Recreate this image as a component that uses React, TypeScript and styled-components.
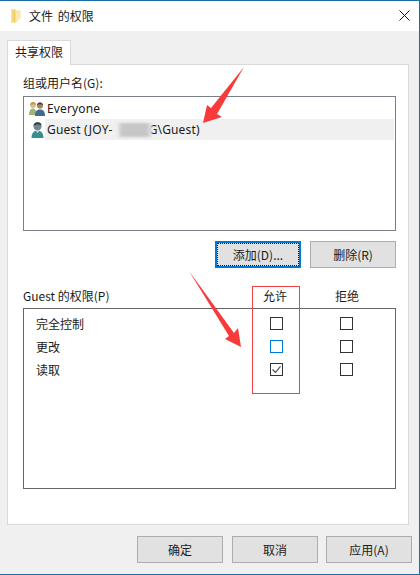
import React from 'react';
import styled, { createGlobalStyle } from 'styled-components';

const GlobalStyle = createGlobalStyle`
  html, body {
    margin: 0;
    padding: 0;
    background: #f0f0f0;
  }
  body {
    font-family: "Noto Sans CJK SC", "Liberation Sans", sans-serif;
    font-size: 12px;
    color: #1a1a1a;
  }
`;

const Window = styled.div`
  position: relative;
  box-sizing: border-box;
  width: 420px;
  height: 575px;
  display: flex;
  flex-direction: column;
  background: #f0f0f0;
  border: 1px solid #1a6ea8;
  border-left: 0;
  overflow: hidden;
`;

const TitleBar = styled.div`
  height: 30px;
  flex: none;
  display: flex;
  align-items: center;
  gap: 8px;
  padding: 0 9px 0 11px;
  background: #fff;
`;

const TitleText = styled.span`
  flex: 1;
  font-size: 12px;
  line-height: 14px;
  word-spacing: 2px;
`;

const CloseGlyph = styled.svg`
  width: 11px;
  height: 11px;
  margin-top: -2px;
`;

const Body = styled.div`
  flex: 1;
  display: flex;
  flex-direction: column;
  padding: 9px 10px 11px 7px;
`;

const TabStrip = styled.div`
  height: 24px;
  flex: none;
  display: flex;
`;

const Tab = styled.div`
  position: relative;
  z-index: 1;
  box-sizing: border-box;
  width: 64px;
  height: 25px;
  padding-top: 2px;
  text-align: center;
  line-height: 18px;
  background: #fff;
  border: 1px solid #d9d9d9;
  border-bottom: 0;
`;

const Panel = styled.div`
  box-sizing: border-box;
  width: 402px;
  height: 461px;
  flex: none;
  display: flex;
  flex-direction: column;
  padding: 8px 12px 35px 15px;
  background: #fff;
  border: 1px solid #d9d9d9;
`;

const FieldLabel = styled.div`
  height: 23px;
  line-height: 19px;
  flex: none;
`;

const UserList = styled.div`
  box-sizing: border-box;
  height: 135px;
  flex: none;
  padding: 1px 1px 0 5px;
  display: flex;
  flex-direction: column;
  background: #fff;
  border: 1px solid #7a7f87;
`;

const UserRow = styled.div`
  height: 21px;
  flex: none;
  display: flex;
  align-items: center;
`;

const IconSlot = styled.span`
  width: 16px;
  flex: none;
  display: flex;
  justify-content: center;
`;

const UserName = styled.span<{ $selected?: boolean }>`
  flex: 1;
  height: 100%;
  display: flex;
  align-items: center;
  padding-left: 2px;
  background: ${(p) => (p.$selected ? '#f0f0f0' : 'transparent')};
  font-family: "Noto Sans", "Liberation Sans", sans-serif;
  letter-spacing: 0.15px;
`;

const Blurred = styled.span`
  position: relative;
  display: inline-block;
  width: 35px;
  height: 14px;
  margin: 0 -3px 0 4px;
  background: linear-gradient(90deg, #ececec, #c8c8c8 14%, #c6c6c6 84%, #e4e4e4);
  filter: blur(1.1px);
`;

const ButtonRow = styled.div<{ $gap: number }>`
  display: flex;
  justify-content: flex-end;
  gap: ${(p) => p.$gap}px;
  flex: none;
`;

const Button = styled.div<{ $focused?: boolean }>`
  box-sizing: border-box;
  width: 86px;
  height: 27px;
  padding-bottom: 1px;
  display: flex;
  align-items: center;
  justify-content: center;
  background: #e1e1e1;
  border: ${(p) => (p.$focused ? '2px solid #0078d7' : '1px solid #adadad')};
  outline: ${(p) => (p.$focused ? '1px dotted #111' : 'none')};
  outline-offset: -3px;
`;

const ActionRow = styled(ButtonRow)`
  margin-top: 10px;
`;

const PermHeader = styled.div`
  height: 30px;
  margin-top: 10px;
  padding-right: 37px;
  flex: none;
  display: grid;
  grid-template-columns: 1fr 24px 24px;
  column-gap: 48px;
  align-items: end;
  line-height: 24px;
  & > span {
    white-space: nowrap;
  }
`;

const PermBox = styled.div`
  box-sizing: border-box;
  height: 181px;
  flex: none;
  padding: 3px 42px 0 12px;
  background: #fff;
  border: 1px solid #666;
`;

const PermRow = styled.div`
  height: 23px;
  display: grid;
  grid-template-columns: 1fr 13px 13px;
  column-gap: 57px;
  align-items: center;
  line-height: 20px;
`;

const Check = styled.span<{ $hover?: boolean }>`
  box-sizing: border-box;
  width: 13px;
  height: 13px;
  display: flex;
  align-items: center;
  justify-content: center;
  background: #fff;
  border: 1px solid ${(p) => (p.$hover ? '#0078d7' : '#333')};
`;

const Footer = styled(ButtonRow)`
  margin-top: 11px;
  margin-right: -3px;
  & > :first-child {
    margin-right: 1px;
  }
`;

const Overlay = styled.svg`
  position: absolute;
  left: 0;
  top: 0;
  width: 420px;
  height: 575px;
  pointer-events: none;
`;

function FolderIcon() {
  return (
    <svg width="10" height="14" viewBox="0 0 10 14">
      <path d="M0 0h4l1 1.500h4.500v8.500H8l-3 4H0z" fill="#fae39a" />
      <path d="M1.500 1h3v11.500h-3z" fill="#f4d06a" />
      <path d="M5 3h4v7H7.500L5 13z" fill="#fbe9ae" />
    </svg>
  );
}

function CloseIcon() {
  return (
    <CloseGlyph viewBox="0 0 11 11">
      <path d="M.5.5l10 10M10.5.5l-10 10" stroke="#111" strokeWidth="1" fill="none" />
    </CloseGlyph>
  );
}

function GroupIcon() {
  return (
    <svg width="16" height="15" viewBox="0 0 16 15">
      <path d="M0 14c0-4 1.500-6.500 4-6.500s3.500 2.500 3.500 6.500z" fill="#9fb473" />
      <circle cx="4" cy="4.200" r="2.800" fill="#e0bc8c" />
      <path d="M1 4.500C1 0 7 0 7 4 5 2.800 3 2.800 1 4.500z" fill="#b99a4e" />
      <path d="M6 15c0-5 2-6.500 5-6.500s5 1.500 5 6.500z" fill="#3f6d8f" />
      <circle cx="11" cy="4.500" r="3.100" fill="#b0825c" />
      <path d="M8 4c.5-3.500 5.500-3.500 6 0-2-1-4-1-6 0z" fill="#3d3a38" />
    </svg>
  );
}

function UserIcon() {
  return (
    <svg width="13" height="17" viewBox="0 0 13 17">
      <path d="M.5 17c0-5 2.500-7.500 6-7.500s6 2.500 6 7.500z" fill="#37908f" />
      <path d="M4.500 9.500h4L6.500 12z" fill="#cfe3e2" />
      <circle cx="6.500" cy="5.200" r="4" fill="#75868d" />
      <path d="M2.500 5C2.500 0 10.500 0 10.500 4.500 8 3 5 3 2.500 5z" fill="#33434b" />
    </svg>
  );
}

function CheckMark() {
  return (
    <svg width="11" height="11" viewBox="0 0 11 11">
      <path d="M1.500 5.500l3 2.800 5-6" stroke="#555" strokeWidth="1.200" fill="none" />
    </svg>
  );
}

const permissions = [
  { name: '完全控制', allow: false, hover: false },
  { name: '更改', allow: false, hover: true },
  { name: '读取', allow: true, hover: false },
];

export default function App() {
  return (
    <>
      <GlobalStyle />
      <Window>
        <TitleBar>
          <FolderIcon />
          <TitleText>文件 的权限</TitleText>
          <CloseIcon />
        </TitleBar>
        <Body>
          <TabStrip>
            <Tab>共享权限</Tab>
          </TabStrip>
          <Panel>
            <FieldLabel>组或用户名(G):</FieldLabel>
            <UserList>
              <UserRow>
                <IconSlot>
                  <GroupIcon />
                </IconSlot>
                <UserName>Everyone</UserName>
              </UserRow>
              <UserRow>
                <IconSlot>
                  <UserIcon />
                </IconSlot>
                <UserName $selected>
                  Guest (JOY-<Blurred />G\Guest)
                </UserName>
              </UserRow>
            </UserList>
            <ActionRow $gap={9}>
              <Button $focused>添加(D)...</Button>
              <Button>删除(R)</Button>
            </ActionRow>
            <PermHeader>
              <span>Guest 的权限(P)</span>
              <span>允许</span>
              <span>拒绝</span>
            </PermHeader>
            <PermBox>
              {permissions.map((perm) => (
                <PermRow key={perm.name}>
                  <span>{perm.name}</span>
                  <Check $hover={perm.hover}>{perm.allow && <CheckMark />}</Check>
                  <Check />
                </PermRow>
              ))}
            </PermBox>
          </Panel>
          <Footer $gap={8}>
            <Button>确定</Button>
            <Button>取消</Button>
            <Button>应用(A)</Button>
          </Footer>
        </Body>
        <Overlay viewBox="0 0 420 575">
          <path d="M244 66L217 113 222 116 203 122 207 104 211 107z" fill="#f93a3a" />
          <path d="M189 270L234 332 238 327 241 346 225 338 229 335z" fill="#f93a3a" />
          <rect x="252.500" y="285.500" width="47" height="107" fill="none" stroke="#f04040" strokeWidth="1" />
        </Overlay>
      </Window>
    </>
  );
}
